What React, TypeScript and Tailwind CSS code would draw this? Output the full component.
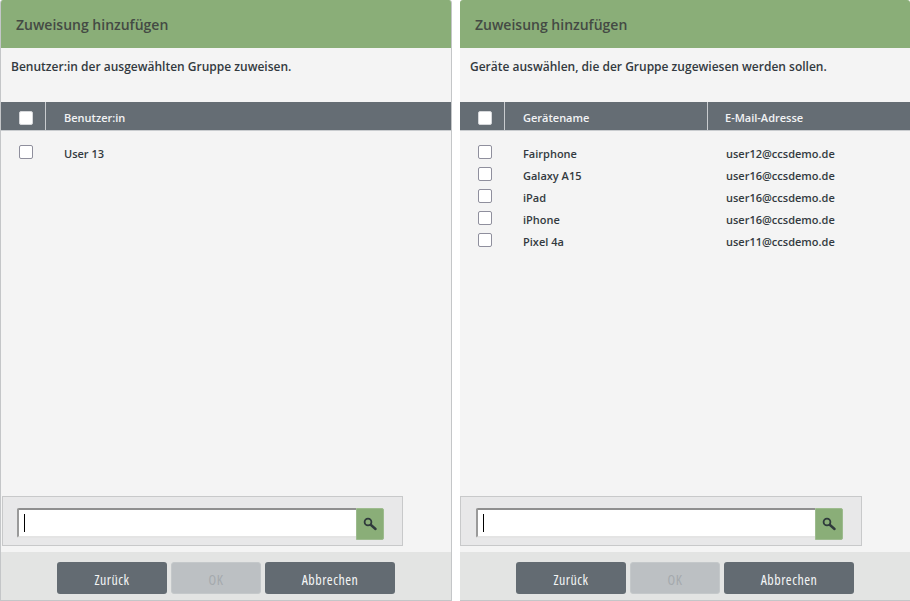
const rows = [
  ["Fairphone", "user12@ccsdemo.de"],
  ["Galaxy A15", "user16@ccsdemo.de"],
  ["iPad", "user16@ccsdemo.de"],
  ["iPhone", "user16@ccsdemo.de"],
  ["Pixel 4a", "user11@ccsdemo.de"],
];

function Box({ head }: { head?: boolean }) {
  return (
    <div
      className={
        "w-[14px] h-[14px] rounded-[2px] border " +
        (head ? "bg-white border-[#d5d7da]" : "bg-white border-[#8f8f9d]")
      }
    />
  );
}

function Panel({
  text,
  border,
  searchBox,
  head,
  children,
}: {
  text: string;
  border: string;
  searchBox: string;
  head: React.ReactNode;
  children: React.ReactNode;
}) {
  return (
    <div className={"h-[601px] flex flex-col bg-[#f4f4f4] rounded-t-[3px] overflow-hidden border-b border-[#c4c6c8] " + border}>
      <div className="h-[48px] shrink-0 bg-[#8aae78] pl-[15px] flex items-center text-[14px] font-semibold text-[#444a44]">
        Zuweisung hinzufügen
      </div>
      <div className="h-[54px] shrink-0 pl-[10px] pt-[10px] text-[12px] leading-[18px] font-semibold text-[#333a40]">{text}</div>
      <div className="h-[29px] shrink-0 flex bg-[#656d74] border-b border-[#c9cccf] text-[11px] font-semibold text-[#f2f3f4]">{head}</div>
      <div className="flex-1 min-h-0">{children}</div>
      <div className={"h-[50px] shrink-0 bg-[#e8e8e9] border border-[#c8c9ca] flex items-start pt-[11px] " + searchBox}>
        <div className="w-[339px] h-[30px] bg-white border-t-2 border-l-2 border-b-2 border-t-[#8f8f8f] border-l-[#9a9a9a] border-b-[#e4e4e4] rounded-l-[2px] flex items-center pl-[5px]">
          <div className="w-[1px] h-[18px] bg-black" />
        </div>
        <div className="w-[28px] h-[32px] bg-[#8aae78] border border-[#9dbb8e] rounded-r-[2px] flex items-center justify-center">
          <svg width="14" height="14" viewBox="0 0 14 14">
            <circle cx="5" cy="5" r="3.4" fill="none" stroke="#2f3a3c" strokeWidth="1.8" />
            <path d="M8 8l4.5 4" stroke="#2f3a3c" strokeWidth="2.4" strokeLinecap="round" />
          </svg>
        </div>
      </div>
      <div className="h-[48px] mt-[6px] shrink-0 bg-[#e3e4e3] pt-[10px] pl-[56px] flex gap-[4px] text-[14px] font-medium tracking-[0.5px] [font-stretch:87%]">
        <div className="w-[110px] h-[32px] pt-[2px] rounded-[3px] bg-[#636b72] text-[#f4f5f5] flex items-center justify-center">Zurück</div>
        <div className="w-[90px] h-[32px] pt-[2px] rounded-[3px] border border-[#c4c8ca] bg-[#bcc0c3] text-[#a4a9ad] flex items-center justify-center">OK</div>
        <div className="w-[130px] h-[32px] pt-[2px] rounded-[3px] bg-[#636b72] text-[#f4f5f5] flex items-center justify-center">Abbrechen</div>
      </div>
    </div>
  );
}

export default function App() {
  return (
    <div className="w-[910px] h-[601px] overflow-hidden bg-white flex gap-[8px] font-['Open_Sans',sans-serif]">
      <div className="w-[452px] shrink-0">
        <Panel
          text="Benutzer:in der ausgewählten Gruppe zuweisen."
          border="border-x border-[#c4c6c8]"
          searchBox="w-[401px] ml-[1px] pl-[14px]"
          head={
            <>
              <div className="w-[45px] border-r border-[#c9cccf] flex items-center pl-[18px] pt-[3px]"><Box head /></div>
              <div className="pl-[18px] pt-[4px] flex items-center">Benutzer:in</div>
            </>
          }
        >
          <div className="flex items-center h-[22px] mt-[12px] text-[11px] font-semibold text-[#333a40]">
            <div className="w-[45px] pl-[18px] mb-[5px]"><Box /></div>
            <div className="pl-[18px]">User 13</div>
          </div>
        </Panel>
      </div>
      <div className="w-[450px] shrink-0">
        <Panel
          text="Geräte auswählen, die der Gruppe zugewiesen werden sollen."
          border=""
          searchBox="w-[402px] pl-[15px]"
          head={
            <>
              <div className="w-[45px] border-r border-[#c9cccf] flex items-center pl-[18px] pt-[3px]"><Box head /></div>
              <div className="w-[203px] border-r border-[#c9cccf] pl-[18px] pt-[4px] flex items-center">Gerätename</div>
              <div className="pl-[17px] pt-[4px] flex items-center">E-Mail-Adresse</div>
            </>
          }
        >
          <div className="pt-[12px] text-[11px] font-semibold text-[#333a40]">
            {rows.map((r) => (
              <div key={r[0]} className="flex items-center h-[22px]">
                <div className="w-[45px] pl-[18px] mb-[5px]"><Box /></div>
                <div className="w-[203px] pl-[18px]">{r[0]}</div>
                <div className="pl-[18px]">{r[1]}</div>
              </div>
            ))}
          </div>
        </Panel>
      </div>
    </div>
  );
}
